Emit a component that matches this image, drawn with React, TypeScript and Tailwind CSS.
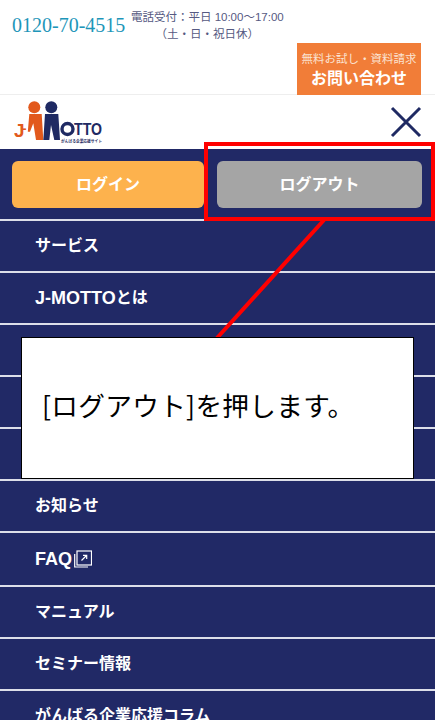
import React from "react";

const jp = "font-['Liberation_Sans','Noto_Sans_CJK_JP',sans-serif]";

function Logo() {
  return (
    <svg width="92" height="46" viewBox="0 0 92 46" className="block">
      <circle cx="20.3" cy="8.3" r="6" fill="#e2591c" />
      <circle cx="37.3" cy="8.3" r="6" fill="#1f2a63" />
      <text x="0" y="38" fontSize="19" fontWeight="700" fill="#e2591c" fontFamily="'Liberation Sans', sans-serif">
        J<tspan fontSize="12" dx="-2" dy="-4">-</tspan>
      </text>
      <path d="M15.3 15 H27.7 L29.3 41 H22 L19.3 24.3 L16 32.7 H13.8 Z" fill="#e2591c" />
      <path d="M31 15 H44.3 L46 41 H40.3 L37 26 L35.3 41 H29.3 Z" fill="#1f2a63" />
      <circle cx="53.5" cy="30" r="5.5" fill="none" stroke="#1f2a63" strokeWidth="3.4" />
      <text x="60" y="36" fontSize="16" fontWeight="700" fill="#1f2a63" fontFamily="'Liberation Sans', sans-serif" textLength="28" lengthAdjust="spacingAndGlyphs">TTO</text>
      <text x="47" y="43.5" fontSize="4" fontWeight="700" fill="#1f2a63" fontFamily="'Noto Sans CJK JP', sans-serif" textLength="41" lengthAdjust="spacingAndGlyphs">がんばる企業応援サイト</text>
    </svg>
  );
}

function MenuRow({ children, tall }: { children?: React.ReactNode; tall?: boolean }) {
  return (
    <div className={`flex items-center border-b-2 border-[#dcdee9] pl-[35px] text-[16px] font-bold leading-[24px] text-white ${tall ? "h-[54px]" : "h-[52px]"}`}>
      {children}
    </div>
  );
}

export default function App() {
  return (
    <div className={`relative h-[720px] w-[435px] overflow-hidden bg-white ${jp}`}>
      <header className="flex h-[95px] border-b border-[#eeeeee]">
        <div className="flex w-full flex-col">
          <div className="flex items-start pl-3 pt-2">
            <span className="mt-[5px] font-['Liberation_Serif',serif] text-[20px] leading-[24px] text-[#1e96b9]">
              0120-70-4515
            </span>
            <div className="ml-[5px] mt-[1px] w-[154px] text-center text-[11.5px] leading-[17px] text-[#565a82]">
              <div>電話受付：平日 10:00〜17:00</div>
              <div>（土・日・祝日休）</div>
            </div>
          </div>
          <div className="mt-auto flex justify-end pr-[14px]">
            <div className="flex h-[52px] w-[124px] flex-col items-center justify-center bg-[#f17d38] pt-[3px] text-white">
              <span className="text-[11.5px] leading-[16px] text-[#fbe3d2]">無料お試し・資料請求</span>
              <span className="text-[16px] font-bold leading-[24px]">お問い合わせ</span>
            </div>
          </div>
        </div>
      </header>

      <div className="flex h-[54px] items-center justify-between pl-[14px] pr-[13px]">
        <Logo />
        <svg width="32" height="32" viewBox="0 0 32 32" stroke="#1f2a63" strokeWidth="3">
          <path d="M2 2 L30 30 M30 2 L2 30" />
        </svg>
      </div>

      <nav className="bg-[#212966]">
        <div className="flex h-[72px] gap-[13px] border-b-2 border-[#dcdee9] px-3 pt-3">
          <div className="flex h-[47px] w-[192px] items-center justify-center rounded-md bg-[#fdb24d] text-[16px] font-bold text-white">
            ログイン
          </div>
          <div className="flex h-[47px] w-[205px] items-center justify-center rounded-md bg-[#a5a5a5] text-[16px] font-bold text-white">
            ログアウト
          </div>
        </div>
        <MenuRow>サービス</MenuRow>
        <MenuRow>
          <span className="text-[18px]">J-MOTTO</span>
          <span>とは</span>
        </MenuRow>
        <MenuRow />
        <MenuRow />
        <MenuRow />
        <MenuRow>お知らせ</MenuRow>
        <MenuRow tall>
          <span className="text-[18px]">FAQ</span>
          <svg width="18" height="18" viewBox="0 0 18 18" fill="none" stroke="#fff" strokeWidth="1.2" className="ml-[2px]">
            <rect x="3" y="1" width="14.5" height="14" />
            <path d="M0.7 4 V17 H14" />
            <path d="M7.5 10.5 L12.5 5.5 M9 5.3 H12.7 V9" />
          </svg>
        </MenuRow>
        <MenuRow>マニュアル</MenuRow>
        <MenuRow>セミナー情報</MenuRow>
        <MenuRow>がんばる企業応援コラム</MenuRow>
      </nav>

      {/* annotation overlay */}
      <div className="absolute left-[204px] top-[142px] h-[79px] w-[231px] border-4 border-[#ff0000]" />
      <svg className="absolute left-0 top-0" width="435" height="720" fill="none">
        <path d="M324 220 L217 338" stroke="#ff0000" strokeWidth="4" />
      </svg>
      <div className="absolute left-[21px] top-[337px] flex h-[142px] w-[393px] items-center border border-black bg-white pb-[7px] pl-[20px] font-['Noto_Sans_CJK_JP',sans-serif] text-[26.67px] tracking-[0.3px] text-black">
        [ログアウト]を押します。
      </div>
    </div>
  );
}
